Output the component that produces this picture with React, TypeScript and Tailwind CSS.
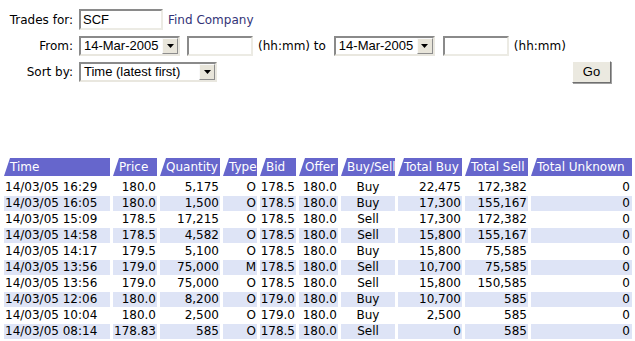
import React from "react";

const rows: string[][] = [
  ["14/03/05 16:29", "180.0", "5,175", "O", "178.5", "180.0", "Buy", "22,475", "172,382", "0"],
  ["14/03/05 16:05", "180.0", "1,500", "O", "178.5", "180.0", "Buy", "17,300", "155,167", "0"],
  ["14/03/05 15:09", "178.5", "17,215", "O", "178.5", "180.0", "Sell", "17,300", "172,382", "0"],
  ["14/03/05 14:58", "178.5", "4,582", "O", "178.5", "180.0", "Sell", "15,800", "155,167", "0"],
  ["14/03/05 14:17", "179.5", "5,100", "O", "178.5", "180.0", "Buy", "15,800", "75,585", "0"],
  ["14/03/05 13:56", "179.0", "75,000", "M", "178.5", "180.0", "Sell", "10,700", "75,585", "0"],
  ["14/03/05 13:56", "179.0", "75,000", "O", "178.5", "180.0", "Sell", "15,800", "150,585", "0"],
  ["14/03/05 12:06", "180.0", "8,200", "O", "179.0", "180.0", "Buy", "10,700", "585", "0"],
  ["14/03/05 10:04", "180.0", "2,500", "O", "179.0", "180.0", "Buy", "2,500", "585", "0"],
  ["14/03/05 08:14", "178.83", "585", "O", "178.5", "180.0", "Sell", "0", "585", "0"],
];

const headers = ["Time", "Price", "Quantity", "Type", "Bid", "Offer", "Buy/Sell", "Total Buy", "Total Sell", "Total Unknown"];

const align = [
  "text-left pl-[1px]",
  "text-right pr-[1px]",
  "text-right pr-[1px]",
  "text-right pr-[1px]",
  "text-right pr-[1px]",
  "text-right pr-[1px]",
  "text-center",
  "text-right pr-[1px]",
  "text-right pr-[1px]",
  "text-right pr-[2px]",
];

const gridCls =
  "grid grid-cols-[106px_44px_60px_34px_36px_39px_54px_64px_63px_101px] gap-x-[3px]";

function Select({ value, w }: { value: string; w: string }) {
  return (
    <div
      className={`${w} h-[20px] flex items-stretch bg-white border-2 border-t-[#8a8a8a] border-l-[#8a8a8a] border-b-[#e9e7df] border-r-[#e9e7df]`}
    >
      <span className="flex-1 pl-[3px] leading-[16px] font-['Liberation_Sans',Arial,sans-serif] text-[13px] text-black whitespace-nowrap overflow-hidden">
        {value}
      </span>
      <span className="w-[16px] bg-[#e8e5da] border border-t-[#fafafa] border-l-[#fafafa] border-b-[#8d8d8d] border-r-[#8d8d8d] flex items-center justify-center">
        <svg width="7" height="4" viewBox="0 0 7 4">
          <path d="M0 0h7L3.5 4z" fill="#000" />
        </svg>
      </span>
    </div>
  );
}

function TextBox({ w, value }: { w: string; value?: string }) {
  return (
    <div
      className={`${w} h-[20px] bg-white border-2 border-t-[#8a8a8a] border-l-[#8a8a8a] border-b-[#ecebe4] border-r-[#ecebe4] pl-[2px] leading-[16px] font-['Liberation_Sans',Arial,sans-serif] text-[13px] text-black`}
    >
      {value}
    </div>
  );
}

export default function App() {
  return (
    <div className="w-[635px] h-[341px] bg-white overflow-hidden font-['DejaVu_Sans',Verdana,sans-serif] text-[12px] text-black">
      <div className="pt-[9px]">
        <div className="flex items-center h-[21px]">
          <span className="w-[73px] text-right whitespace-nowrap">Trades for:</span>
          <div className="ml-[6px]">
            <div className="w-[84px] h-[21px] bg-white border-2 border-t-[#8a8a8a] border-l-[#8a8a8a] border-b-[#ecebe4] border-r-[#ecebe4] pl-[2px] leading-[17px] font-['Liberation_Sans',Arial,sans-serif] text-[13px] text-black">
              SCF
            </div>
          </div>
          <a className="ml-[5px] text-[#333377] whitespace-nowrap">Find Company</a>
        </div>
        <div className="flex items-center h-[20px] mt-[6px]">
          <span className="w-[73px] text-right">From:</span>
          <div className="ml-[6px]">
            <Select value="14-Mar-2005" w="w-[101px]" />
          </div>
          <div className="ml-[7px]">
            <TextBox w="w-[66px]" />
          </div>
          <span className="ml-[5px] whitespace-nowrap">(hh:mm) to</span>
          <div className="ml-[8px]">
            <Select value="14-Mar-2005" w="w-[101px]" />
          </div>
          <div className="ml-[8px]">
            <TextBox w="w-[66px]" />
          </div>
          <span className="ml-[5px] whitespace-nowrap">(hh:mm)</span>
        </div>
        <div className="flex items-center h-[22px] mt-[5px]">
          <span className="w-[73px] text-right whitespace-nowrap">Sort by:</span>
          <div className="ml-[6px]">
            <Select value="Time (latest first)" w="w-[138px]" />
          </div>
          <button className="ml-auto mr-[24px] w-[39px] h-[22px] bg-[#ebe9e0] border border-t-[#ffffff] border-l-[#ffffff] border-b-[#6f6f6f] border-r-[#6f6f6f] shadow-[1px_1px_0_#a0a0a0] font-['Liberation_Sans',Arial,sans-serif] text-[13px] text-black leading-[20px]">
            Go
          </button>
        </div>
      </div>

      <div className="mt-[75px] pl-[4px]">
        <div className={`${gridCls} h-[18px] mb-[4px]`}>
          {headers.map((h) => (
            <div
              key={h}
              className="h-[18px] bg-[#6666cc] text-white pl-[6px] leading-[18px] whitespace-nowrap overflow-hidden [clip-path:polygon(6px_0,100%_0,100%_100%,0_100%)]"
            >
              {h}
            </div>
          ))}
        </div>
        {rows.map((r, i) => (
          <div key={i} className={`${gridCls} h-[15px] mb-[1px]`}>
            {r.map((c, j) => (
              <div
                key={j}
                className={`${align[j]} h-[15px] leading-[15px] whitespace-nowrap ${
                  i % 2 === 1 ? "bg-[#dee4f6]" : "bg-white"
                }`}
              >
                {c}
              </div>
            ))}
          </div>
        ))}
      </div>
    </div>
  );
}
